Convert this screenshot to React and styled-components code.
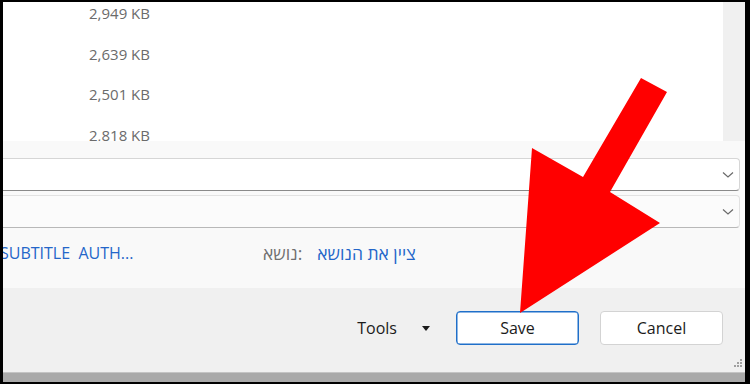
import React from 'react'
import styled, {createGlobalStyle} from 'styled-components'

const Global = createGlobalStyle`
    html, body {
        margin: 0;
        padding: 0;
        background: #000;
        width: 750px;
        height: 384px;
        overflow: hidden;
    }
    body {
        font-family: "Open Sans", "DejaVu Sans", sans-serif;
    }
`;

const files = ['2,949 KB', '2,639 KB', '2,501 KB', '2,818 KB', '2,700 KB']

const App = () => {
    return (
        <>
        <Global />
        <Window>
            <ListArea>
                <FileList>
                    <Rows>
                        {files.map(f => (
                            <Row key={f}>
                                <Size>{f}</Size>
                            </Row>
                        ))}
                    </Rows>
                </FileList>
                <Scrollbar />
            </ListArea>
            <FormPanel>
                <Field>
                    <Chevron />
                </Field>
                <Field muted>
                    <Chevron />
                </Field>
                <MetaRow>
                    <Author>SUBTITLE&nbsp; AUTH...</Author>
                    <Label>נושא:</Label>
                    <Subject>ציין את הנושא</Subject>
                </MetaRow>
            </FormPanel>
            <Footer>
                <ToolsMenu>
                    Tools
                    <Caret />
                </ToolsMenu>
                <Button primary>Save</Button>
                <Button>Cancel</Button>
                <Grip>
                    <svg width="10" height="10" viewBox="0 0 10 10">
                        {[[8, 2], [5, 5], [8, 5], [2, 8], [5, 8], [8, 8]].map(([x, y]) => (
                            <rect key={x + '-' + y} x={x - 1} y={y - 1} width="2" height="2" fill="#a0a0a0" />
                        ))}
                    </svg>
                </Grip>
            </Footer>
            <BottomBar />
        </Window>
        <Arrow viewBox="0 0 750 384" width="750" height="384">
            <polygon
                points="641,78 667,92 610,192 660,223 520,313 532,148 583,177"
                fill="#ff0000"
            />
        </Arrow>
        </>
    )
}

const Chevron = () => (
    <ChevronIcon width="12" height="8" viewBox="0 0 12 8">
        <path d="M1 1.5 L6 6 L11 1.5" fill="none" stroke="#6a6a6a" strokeWidth="1.2" />
    </ChevronIcon>
)

const Window = styled.div`
    position: relative;
    margin: 2px 5px 0 3px;
    width: 742px;
    height: 380px;
    display: flex;
    flex-direction: column;
    overflow: hidden;
    background: #f0f0f0;
`;
const ListArea = styled.div`
    height: 139px;
    display: flex;
    flex-shrink: 0;
`;
const FileList = styled.div`
    flex: 1;
    background: #fff;
    overflow: hidden;
`;
const Rows = styled.div`
    margin-top: -9px;
`;
const Row = styled.div`
    height: 40.5px;
    display: flex;
    align-items: center;
    justify-content: flex-end;
    width: 147px;
`;
const Size = styled.span`
    font-size: 15px;
    color: #6b6b6b;
`;
const Scrollbar = styled.div`
    width: 22px;
    background: #f0f0f0;
`;
const FormPanel = styled.div`
    height: 147px;
    flex-shrink: 0;
    background: #f9f9f9;
    padding: 17px 5px 0 0;
    box-sizing: border-box;
    display: flex;
    flex-direction: column;
    gap: 4px;
`;
const Field = styled.div`
    height: 33px;
    box-sizing: border-box;
    margin-left: -10px;
    background: ${({muted}) => (muted ? '#fbfbfb' : '#fff')};
    border: 1px solid ${({muted}) => (muted ? '#e2e2e2' : '#d6d6d6')};
    border-bottom: 1px solid ${({muted}) => (muted ? '#b8b8b8' : '#8a8a8a')};
    border-radius: 4px;
    display: flex;
    align-items: center;
    justify-content: flex-end;
    padding-right: 5px;
`;
const ChevronIcon = styled.svg`
    display: block;
`;
const MetaRow = styled.div`
    margin-top: 10px;
    height: 22px;
    display: flex;
    align-items: center;
    direction: ltr;
`;
const Author = styled.span`
    font-size: 16px;
    color: #2466c9;
    margin-left: -3px;
    width: 263px;
    white-space: nowrap;
`;
const Label = styled.span`
    font-size: 17.5px;
    color: #707070;
`;
const Subject = styled.span`
    font-size: 17.5px;
    color: #2466c9;
    margin-left: 15px;
`;
const Footer = styled.div`
    position: relative;
    height: 84px;
    flex-shrink: 0;
    background: #f0f0f0;
    display: flex;
    align-items: flex-start;
    justify-content: flex-end;
    padding: 23px 22px 0 0;
    box-sizing: border-box;
    gap: 21px;
`;
const ToolsMenu = styled.div`
    height: 34px;
    display: flex;
    align-items: center;
    gap: 25px;
    font-size: 16px;
    color: #1b1b1b;
    margin-right: 5px;
`;
const Caret = styled.span`
    width: 0;
    height: 0;
    border-left: 4px solid transparent;
    border-right: 4px solid transparent;
    border-top: 5px solid #1b1b1b;
`;
const Button = styled.button`
    width: 123px;
    height: 34px;
    box-sizing: border-box;
    background: #fff;
    border: 1px solid ${({primary}) => (primary ? '#1f6fc9' : '#d3d3d3')};
    ${({primary}) => primary && 'box-shadow: inset 0 0 0 0.5px #1f6fc9;'}
    border-radius: 4px;
    font-family: "Open Sans", sans-serif;
    font-size: 16px;
    color: #1b1b1b;
    padding: 0;
`;
const Grip = styled.div`
    position: absolute;
    right: 2px;
    bottom: 4px;
    line-height: 0;
`;
const BottomBar = styled.div`
    height: 10px;
    flex-shrink: 0;
    background: #a9a9a9;
    border-top: 1px solid #c4c4c4;
`;
const Arrow = styled.svg`
    position: absolute;
    top: 0;
    left: 0;
    pointer-events: none;
`;

export default App
